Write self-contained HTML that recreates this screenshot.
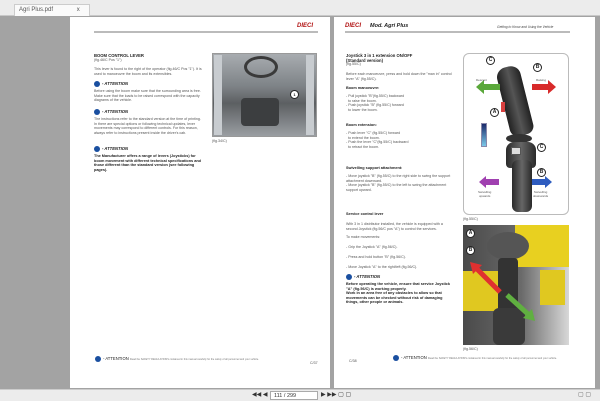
<!DOCTYPE html>
<html><head><meta charset="utf-8"><style>
*{margin:0;padding:0;box-sizing:border-box}
body{width:600px;height:401px;overflow:hidden;background:#a3a3a3;font-family:"Liberation Sans",sans-serif;position:relative;color:#333}
.a{position:absolute}
.top{left:0;top:0;width:600px;height:16px;background:#ececec;border-bottom:1px solid #c8c8c8}
.tab{left:14px;top:4px;width:76px;height:12px;background:#fafafa;border:1px solid #ccc;border-bottom:none;font-size:6px;padding:2px 4px;color:#555}
.page{background:#fff;top:17px;height:371px}
.t{font-size:3.6px;line-height:4.6px;color:#555}
.h{font-size:4.2px;font-weight:bold;color:#222}
.b{font-size:3.8px;line-height:4.6px;font-weight:bold;color:#222}
.att{font-size:4.2px;font-style:italic;font-weight:bold;color:#222}
.ic{display:inline-block;width:6px;height:6px;border-radius:50%;background:#1a4fa0;vertical-align:middle;margin-right:2px}
.bar{left:0;top:389px;width:600px;height:12px;background:#ececec;border-top:1px solid #ccc}
.rule{height:2px;background:#bbb}
.logo{font-size:6px;font-weight:bold;font-style:italic;color:#b01010}
.c{width:9px;height:9px;border-radius:50%;background:#fff;border:1px solid #222;font-size:5px;font-weight:bold;text-align:center;line-height:7px;color:#222}
</style></head><body>
<div class="a top"></div>
<div class="a tab">Agri Plus.pdf <span style="margin-left:22px">x</span></div>

<div class="a page" style="left:70px;width:260px"></div>
<div class="a logo" style="left:297px;top:23px">DIECI</div>
<div class="a rule" style="left:94px;top:31px;width:224px"></div>
<div class="a h" style="left:94px;top:53px">BOOM CONTROL LEVER</div>
<div class="a t" style="left:94px;top:58px">(fig.46/C Pos "1")</div>
<div class="a t" style="left:94px;top:67px;width:108px">This lever is found to the right of the operator (fig.46/C Pos "1"). It is used to manoeuvre the boom and its extensibles.</div>
<div class="a att" style="left:94px;top:81px"><span class="ic"></span>- ATTENTION</div>
<div class="a t" style="left:94px;top:89px;width:108px">Before using the boom make sure that the surrounding area is free. Make sure that the loads to be raised correspond with the capacity diagrams of the vehicle.</div>
<div class="a att" style="left:94px;top:109px"><span class="ic"></span>- ATTENTION</div>
<div class="a t" style="left:94px;top:117px;width:108px">The instructions refer to the standard version at the time of printing. In there are special options or following technical updates, lever movements may correspond to different controls. For this reason, always refer to instructions present inside the driver's cab.</div>
<div class="a att" style="left:94px;top:146px"><span class="ic"></span>- ATTENTION</div>
<div class="a b" style="left:94px;top:154px;width:108px">The Manufacturer offers a range of levers (Joysticks) for boom movement with different technical specifications and those different than the standard version (see following pages).</div>
<div class="a" style="left:212px;top:53px;width:105px;height:84px;background:linear-gradient(180deg,#a8acb0,#7d8286 40%,#5c5f62 60%,#9a9ea2);border:1px solid #999"></div>
<div class="a" style="left:214px;top:55px;width:8px;height:80px;background:#c8ccd0"></div>
<div class="a" style="left:306px;top:55px;width:8px;height:80px;background:#c8ccd0"></div>
<div class="a" style="left:241px;top:98px;width:38px;height:28px;background:#3c3e40;border-radius:4px"></div>
<div class="a" style="left:244px;top:56px;width:34px;height:22px;border:3px solid #3a3a3a;border-radius:50%"></div>
<div class="a c" style="left:290px;top:90px;font-size:4px">1</div>
<div class="a t" style="left:212px;top:139px">(fig.34/C)</div>
<div class="a att" style="left:95px;top:356px;font-weight:normal;font-style:normal"><span class="ic"></span>- ATTENTION <span style="font-size:2.5px;color:#777">Read the SAFETY REGULATIONS contained in this manual carefully for the safety of all personnel and your vehicle.</span></div>
<div class="a t" style="left:310px;top:361px">C/37</div>

<div class="a page" style="left:334px;width:261px"></div>
<div class="a logo" style="left:345px;top:23px">DIECI</div>
<div class="a" style="left:370px;top:23px;font-size:5.5px;font-weight:bold;font-style:italic;color:#222">Mod. Agri Plus</div>
<div class="a" style="left:497px;top:25px;font-size:3.3px;font-style:italic;color:#444">Getting to Know and Using the Vehicle</div>
<div class="a rule" style="left:345px;top:31px;width:225px"></div>
<div class="a h" style="left:346px;top:53px">Joystick 3 in 1 extension ON/OFF<br>(Standard version)</div>
<div class="a t" style="left:346px;top:62px">(fig.55/C)</div>
<div class="a t" style="left:346px;top:72px;width:108px">Before each manoeuvre, press and hold down the "man in" control lever "A" (fig.55/C).</div>
<div class="a h" style="left:346px;top:86px;font-size:3.8px">Boom manoeuvre:</div>
<div class="a t" style="left:346px;top:94px">- Pull joystick "B"(fig.55/C) backward<br>&nbsp; to raise the boom.<br>- Push joystick "B" (fig.55/C) forward<br>&nbsp; to lower the boom.</div>
<div class="a h" style="left:346px;top:123px;font-size:3.8px">Boom extension:</div>
<div class="a t" style="left:346px;top:131px">- Push lever "C" (fig.55/C) forward<br>&nbsp; to extend the boom.<br>- Push the lever "C"(fig.55/C) backward<br>&nbsp; to retract the boom.</div>
<div class="a h" style="left:346px;top:166px;font-size:3.8px">Swivelling support attachment:</div>
<div class="a t" style="left:346px;top:174px;width:108px">- Move joystick "B" (fig.55/C) to the right side to swing the support attachment downward.<br>- Move joystick "B" (fig.55/C) to the left to swing the attachment support upward.</div>
<div class="a h" style="left:346px;top:212px;font-size:3.8px">Service control lever</div>
<div class="a t" style="left:346px;top:222px;width:108px">With 3 in 1 distributor installed, the vehicle is equipped with a second Joystick (fig.56/C pos "A") to control the services.</div>
<div class="a t" style="left:346px;top:235px">To make movements:</div>
<div class="a t" style="left:346px;top:245px">- Grip the Joystick "A" (fig.56/C).</div>
<div class="a t" style="left:346px;top:255px">- Press and hold button "B" (fig.56/C).</div>
<div class="a t" style="left:346px;top:265px">- Move Joystick "A" to the right/left (fig.56/C).</div>
<div class="a att" style="left:346px;top:274px"><span class="ic"></span>- ATTENTION</div>
<div class="a b" style="left:346px;top:282px;width:108px">Before operating the vehicle, ensure that service Joystick "A" (fig.56/C) is working properly.<br>Work in an area free of any obstacles to allow so that movements can be checked without risk of damaging things, other people or animals.</div>

<div class="a" style="left:463px;top:53px;width:106px;height:162px;border:1px solid #bbb;border-radius:6px;background:#fff"></div>
<div class="a" style="left:503px;top:66px;width:24px;height:70px;background:linear-gradient(90deg,#222,#555,#222);border-radius:10px 10px 8px 8px;transform:rotate(-14deg)"></div>
<div class="a" style="left:506px;top:134px;width:26px;height:9px;background:#333;border-radius:50%"></div>
<div class="a" style="left:501px;top:102px;width:4px;height:10px;background:#d84040"></div>
<div class="a" style="left:506px;top:142px;width:30px;height:26px;background:linear-gradient(90deg,#2a2a2a,#666,#2a2a2a);border-radius:8px 8px 4px 4px"></div>
<div class="a" style="left:512px;top:160px;width:20px;height:52px;background:linear-gradient(90deg,#2a2a2a,#666,#2a2a2a);border-radius:6px"></div>
<div class="a" style="left:511px;top:147px;width:10px;height:8px;background:#ddd;border:1px solid #555"></div>
<svg class="a" style="left:476px;top:80px" width="24" height="14"><polygon points="0,7 8,0 8,4 24,4 24,10 8,10 8,14" fill="#5aa83a"/></svg>
<svg class="a" style="left:532px;top:80px" width="24" height="14"><polygon points="24,7 16,0 16,4 0,4 0,10 16,10 16,14" fill="#d82a2a"/></svg>
<svg class="a" style="left:479px;top:176px" width="20" height="12"><polygon points="0,6 7,0 7,3 20,3 20,9 7,9 7,12" fill="#a040b0"/></svg>
<svg class="a" style="left:532px;top:176px" width="20" height="12"><polygon points="20,6 13,0 13,3 0,3 0,9 13,9 13,12" fill="#2e5cc0"/></svg>
<div class="a" style="left:481px;top:123px;width:6px;height:24px;background:linear-gradient(#1a2a6a,#7ac8e8);border:1px solid #88a"></div>
<div class="a" style="left:476px;top:84px;font-size:3px;color:#555;margin-top:-6px">Descent</div>
<div class="a" style="left:536px;top:84px;font-size:3px;color:#555;margin-top:-6px">Raising</div>
<div class="a" style="left:478px;top:190px;font-size:3px;color:#555;text-align:center">Swivelling<br>upwards</div>
<div class="a" style="left:533px;top:190px;font-size:3px;color:#555;text-align:center">Swivelling<br>downwards</div>
<div class="a c" style="left:486px;top:56px">C</div>
<div class="a c" style="left:533px;top:63px">B</div>
<div class="a c" style="left:490px;top:108px">A</div>
<div class="a c" style="left:537px;top:143px">C</div>
<div class="a c" style="left:537px;top:168px">B</div>
<div class="a t" style="left:463px;top:217px">(fig.55/C)</div>
<div class="a" style="left:463px;top:225px;width:106px;height:120px;background:linear-gradient(90deg,#4a4a4a 0%,#6a6a6a 55%,#d8d8d8 100%)"></div>
<div class="a" style="left:515px;top:225px;width:54px;height:42px;background:#e8d020"></div>
<div class="a" style="left:463px;top:271px;width:42px;height:40px;background:#e0c820"></div>
<div class="a" style="left:540px;top:270px;width:25px;height:35px;background:#e0c820"></div>
<div class="a" style="left:487px;top:232px;width:42px;height:28px;background:#555;border-radius:50%"></div>
<div class="a" style="left:498px;top:258px;width:20px;height:60px;background:#333;border-radius:4px"></div>
<div class="a" style="left:493px;top:308px;width:32px;height:37px;background:#3a3a3a;border-radius:6px"></div>
<svg class="a" style="left:470px;top:262px" width="34" height="32"><line x1="30" y1="30" x2="6" y2="6" stroke="#e03030" stroke-width="5"/><polygon points="0,0 12,3 3,12" fill="#e03030"/></svg>
<svg class="a" style="left:505px;top:293px" width="30" height="28"><line x1="2" y1="2" x2="24" y2="22" stroke="#60b040" stroke-width="5"/><polygon points="30,28 18,25 27,16" fill="#60b040"/></svg>
<div class="a c" style="left:466px;top:229px">A</div>
<div class="a c" style="left:466px;top:246px">B</div>
<div class="a t" style="left:463px;top:347px">(fig.56/C)</div>
<div class="a t" style="left:349px;top:359px">C/38</div>
<div class="a att" style="left:393px;top:355px;font-weight:normal;font-style:normal"><span class="ic"></span>- ATTENTION <span style="font-size:2.5px;color:#777">Read the SAFETY REGULATIONS contained in this manual carefully for the safety of all personnel and your vehicle.</span></div>

<div class="a bar"></div>
<div class="a" style="left:252px;top:391px;font-size:6px;color:#333">◀◀ ◀</div>
<div class="a" style="left:270px;top:391px;width:48px;height:9px;background:#fff;border:1px solid #aaa;font-size:5.5px;padding:1px 3px;color:#333">111 / 299</div>
<div class="a" style="left:321px;top:391px;font-size:6px;color:#333">▶ ▶▶ ▢ ▢</div>
<div class="a" style="left:578px;top:391px;font-size:6px;color:#666">▢ ▢</div>
</body></html>
